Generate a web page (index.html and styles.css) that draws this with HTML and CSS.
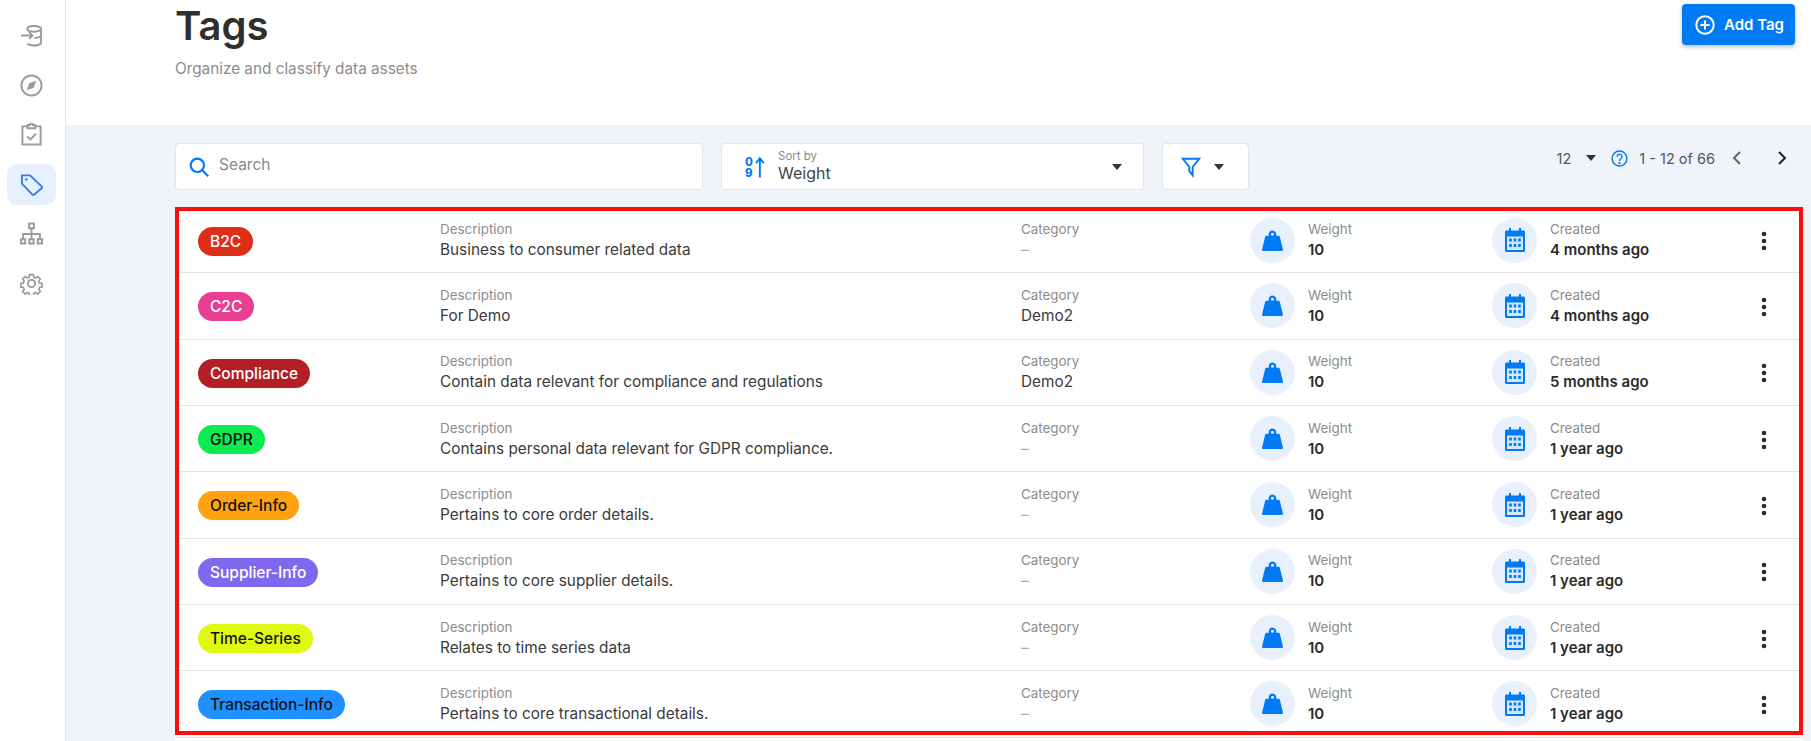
FILE: index.html
```html
<!DOCTYPE html>
<html lang="en">
<head>
    <meta charset="UTF-8">
    <title>Tags</title>
    <link rel="stylesheet" href="styles.css">
</head>
<body>
    <svg class="icon-defs" width="0" height="0">
        <symbol id="i-weight" viewBox="0 0 24 24">
            <path fill-rule="evenodd" d="M12 1.500a4 4 0 0 1 3.700 5.500H18c.8 0 1.500.5 1.700 1.300l3.200 13c.2.800-.3 1.700-1.200 1.700H2.300c-.9 0-1.400-.9-1.200-1.700l3.200-13C4.500 7.500 5.200 7 6 7h2.300A4 4 0 0 1 12 1.500zm0 2.400a1.600 1.600 0 1 0 0 3.200 1.600 1.600 0 0 0 0-3.200z"/>
        </symbol>
        <symbol id="i-calendar" viewBox="0 0 20 24">
            <path class="cal-body" d="M2 8h16v14H2z"/>
            <path d="M4 0h2v2.500h8V0h2v2.500h2.500c.8 0 1.500.7 1.500 1.500v18.500c0 .8-.7 1.500-1.500 1.500h-17C.7 24 0 23.300 0 22.500V4c0-.8.7-1.500 1.500-1.500H4zM2 8.500V22h16V8.500z"/>
            <path d="M4.200 10.500h2.600v3H4.200zm4.500 0h2.600v3H8.700zm4.500 0h2.600v3h-2.600zM4.200 16h2.600v3H4.200zm4.500 0h2.600v3H8.700zm4.500 0h2.600v3h-2.600z"/>
        </symbol>
        <symbol id="i-dots" viewBox="0 0 6 20">
            <circle cx="3" cy="3" r="2.300"/><circle cx="3" cy="10" r="2.300"/><circle cx="3" cy="17" r="2.300"/>
        </symbol>
    </svg>

    <div class="app">
        <nav class="sidebar">
            <a class="nav-item">
                <svg viewBox="0 0 24 24"><path d="M1 12h12M9.500 8.500 13 12l-3.500 3.500M7.500 5C7.500 3.300 10.500 2 14.500 2s7.500 1.300 7.500 3v14.500c0 1.700-3.500 3-7.500 3-3 0-5.500-.7-6.800-1.800M7.500 5c0 1.700 3 3 7 3s7.500-1.300 7.500-3M15 14.500c4 0 7-1 7-3"/></svg>
            </a>
            <a class="nav-item">
                <svg viewBox="0 0 24 24"><circle cx="12" cy="12" r="10.500"/><path class="solid" d="m17 7-2.700 7.300L7 17l2.700-7.300z"/></svg>
            </a>
            <a class="nav-item">
                <svg viewBox="0 0 24 24"><path d="M8 3.500H2.500v19h19v-19H16M8 2h2.500a1.500 1.500 0 0 1 3 0H16v3.500H8zM7.500 14l3.200 3.200 6-6"/></svg>
            </a>
            <a class="nav-item active">
                <svg viewBox="0 0 24 24"><path d="M2 2.500h8.500L22.500 14a1.400 1.400 0 0 1 0 2L15 22.500a1.400 1.400 0 0 1-2 0L2 11z"/><circle class="solid" cx="6.500" cy="6.800" r="1.300"/></svg>
            </a>
            <a class="nav-item">
                <svg viewBox="0 0 24 24"><path d="M9.500 1.500h5v5h-5zM1 18h4.500v4.500H1zm8.750 0h4.500v4.500h-4.500zm8.750 0H23v4.500h-4.500zM12 6.500V18M3.250 18v-5.500h17.500V18"/></svg>
            </a>
            <a class="nav-item">
                <svg viewBox="0 0 24 24"><circle cx="12" cy="12" r="3.800"/><path d="M9.800 1.500h4.400l.6 3.100 2 .9 2.700-1.800 3 3-1.800 2.700.9 2 2.900.6v4.200l-2.900.6-.9 2 1.800 2.700-3 3-2.700-1.800-2 .9-.6 3.100H9.800l-.6-3.100-2-.9-2.700 1.800-3-3 1.800-2.700-.9-2-2.900-.6v-4.200l2.900-.6.9-2-1.800-2.700 3-3 2.700 1.800 2-.9z" transform="translate(1.400 1.400) scale(.88)"/></svg>
            </a>
        </nav>

        <main class="main">
            <header class="page-header">
                <div>
                    <h1>Tags</h1>
                    <p class="subtitle">Organize and classify data assets</p>
                </div>
                <button class="add-btn">
                    <svg viewBox="0 0 24 24"><circle cx="12" cy="12" r="10.500"/><path d="M12 6.500v11M6.500 12h11"/></svg>
                    Add Tag
                </button>
            </header>

            <section class="content">
                <div class="toolbar">
                    <div class="box search-box">
                        <svg class="ico" viewBox="0 0 24 24"><circle cx="10" cy="10" r="8"/><path d="m16 16 7 7"/></svg>
                        <span>Search</span>
                    </div>
                    <div class="box sort-box">
                        <svg class="sort-ico" viewBox="0 0 24 24"><text x="0" y="11" class="digit">0</text><text x="0" y="23.500" class="digit">9</text><path d="M17 24V3M12.500 7.500 17 2l4.500 5.500"/></svg>
                        <div class="sort-text">
                            <span class="sort-label">Sort by</span>
                            <span class="sort-value">Weight</span>
                        </div>
                        <i class="caret"></i>
                    </div>
                    <div class="box filter-box">
                        <svg class="ico" viewBox="0 0 24 24"><path d="M2 2h20l-8 10v10l-4-5v-5z"/></svg>
                        <i class="caret"></i>
                    </div>
                    <div class="pager">
                        <span class="page-size">12</span>
                        <i class="caret"></i>
                        <svg class="help" viewBox="0 0 24 24"><circle cx="12" cy="12" r="10.500"/><path d="M8.500 9.500a3.500 3.500 0 1 1 5.500 2.900c-1.300.9-2 1.600-2 3"/><circle class="dot" cx="12" cy="18.500" r=".7"/></svg>
                        <span class="page-range">1 - 12 of 66</span>
                        <svg class="chev prev" viewBox="0 0 10 16"><path d="M8 2 2 8l6 6"/></svg>
                        <svg class="chev next" viewBox="0 0 10 16"><path d="m2 2 6 6-6 6"/></svg>
                    </div>
                </div>

                <div class="tag-list">
                    <div class="row">
                        <div><span class="pill pill-b2c">B2C</span></div>
                        <div><div class="label">Description</div><div class="value">Business to consumer related data</div></div>
                        <div><div class="label">Category</div><div class="value muted">–</div></div>
                        <div class="stat"><span class="circle"><svg class="weight"><use href="#i-weight"/></svg></span><div><div class="label">Weight</div><div class="value strong">10</div></div></div>
                        <div class="stat"><span class="circle"><svg class="cal"><use href="#i-calendar"/></svg></span><div><div class="label">Created</div><div class="value strong">4 months ago</div></div></div>
                        <svg class="dots"><use href="#i-dots"/></svg>
                    </div>
                    <div class="row">
                        <div><span class="pill pill-c2c">C2C</span></div>
                        <div><div class="label">Description</div><div class="value">For Demo</div></div>
                        <div><div class="label">Category</div><div class="value">Demo2</div></div>
                        <div class="stat"><span class="circle"><svg class="weight"><use href="#i-weight"/></svg></span><div><div class="label">Weight</div><div class="value strong">10</div></div></div>
                        <div class="stat"><span class="circle"><svg class="cal"><use href="#i-calendar"/></svg></span><div><div class="label">Created</div><div class="value strong">4 months ago</div></div></div>
                        <svg class="dots"><use href="#i-dots"/></svg>
                    </div>
                    <div class="row">
                        <div><span class="pill pill-compliance">Compliance</span></div>
                        <div><div class="label">Description</div><div class="value">Contain data relevant for compliance and regulations</div></div>
                        <div><div class="label">Category</div><div class="value">Demo2</div></div>
                        <div class="stat"><span class="circle"><svg class="weight"><use href="#i-weight"/></svg></span><div><div class="label">Weight</div><div class="value strong">10</div></div></div>
                        <div class="stat"><span class="circle"><svg class="cal"><use href="#i-calendar"/></svg></span><div><div class="label">Created</div><div class="value strong">5 months ago</div></div></div>
                        <svg class="dots"><use href="#i-dots"/></svg>
                    </div>
                    <div class="row">
                        <div><span class="pill pill-gdpr">GDPR</span></div>
                        <div><div class="label">Description</div><div class="value">Contains personal data relevant for GDPR compliance.</div></div>
                        <div><div class="label">Category</div><div class="value muted">–</div></div>
                        <div class="stat"><span class="circle"><svg class="weight"><use href="#i-weight"/></svg></span><div><div class="label">Weight</div><div class="value strong">10</div></div></div>
                        <div class="stat"><span class="circle"><svg class="cal"><use href="#i-calendar"/></svg></span><div><div class="label">Created</div><div class="value strong">1 year ago</div></div></div>
                        <svg class="dots"><use href="#i-dots"/></svg>
                    </div>
                    <div class="row">
                        <div><span class="pill pill-order">Order-Info</span></div>
                        <div><div class="label">Description</div><div class="value">Pertains to core order details.</div></div>
                        <div><div class="label">Category</div><div class="value muted">–</div></div>
                        <div class="stat"><span class="circle"><svg class="weight"><use href="#i-weight"/></svg></span><div><div class="label">Weight</div><div class="value strong">10</div></div></div>
                        <div class="stat"><span class="circle"><svg class="cal"><use href="#i-calendar"/></svg></span><div><div class="label">Created</div><div class="value strong">1 year ago</div></div></div>
                        <svg class="dots"><use href="#i-dots"/></svg>
                    </div>
                    <div class="row">
                        <div><span class="pill pill-supplier">Supplier-Info</span></div>
                        <div><div class="label">Description</div><div class="value">Pertains to core supplier details.</div></div>
                        <div><div class="label">Category</div><div class="value muted">–</div></div>
                        <div class="stat"><span class="circle"><svg class="weight"><use href="#i-weight"/></svg></span><div><div class="label">Weight</div><div class="value strong">10</div></div></div>
                        <div class="stat"><span class="circle"><svg class="cal"><use href="#i-calendar"/></svg></span><div><div class="label">Created</div><div class="value strong">1 year ago</div></div></div>
                        <svg class="dots"><use href="#i-dots"/></svg>
                    </div>
                    <div class="row">
                        <div><span class="pill pill-time">Time-Series</span></div>
                        <div><div class="label">Description</div><div class="value">Relates to time series data</div></div>
                        <div><div class="label">Category</div><div class="value muted">–</div></div>
                        <div class="stat"><span class="circle"><svg class="weight"><use href="#i-weight"/></svg></span><div><div class="label">Weight</div><div class="value strong">10</div></div></div>
                        <div class="stat"><span class="circle"><svg class="cal"><use href="#i-calendar"/></svg></span><div><div class="label">Created</div><div class="value strong">1 year ago</div></div></div>
                        <svg class="dots"><use href="#i-dots"/></svg>
                    </div>
                    <div class="row">
                        <div><span class="pill pill-transaction">Transaction-Info</span></div>
                        <div><div class="label">Description</div><div class="value">Pertains to core transactional details.</div></div>
                        <div><div class="label">Category</div><div class="value muted">–</div></div>
                        <div class="stat"><span class="circle"><svg class="weight"><use href="#i-weight"/></svg></span><div><div class="label">Weight</div><div class="value strong">10</div></div></div>
                        <div class="stat"><span class="circle"><svg class="cal"><use href="#i-calendar"/></svg></span><div><div class="label">Created</div><div class="value strong">1 year ago</div></div></div>
                        <svg class="dots"><use href="#i-dots"/></svg>
                    </div>
                    <div class="highlight"></div>
                </div>
            </section>
        </main>
    </div>
</body>
</html>
```

FILE: styles.css
```css
* {
    box-sizing: border-box;
}

html, body {
    margin: 0;
    height: 100%;
    overflow: hidden;
}

body {
    font-family: "Inter", "Noto Sans", sans-serif;
    color: #333;
    background: #fff;
}

.icon-defs {
    position: absolute;
}

.app {
    display: flex;
    height: 741px;
    overflow: hidden;
}

/* Sidebar */
.sidebar {
    width: 66px;
    flex: none;
    border-right: 1px solid #e6e6e6;
    padding: 15px 0 0 7px;
    display: flex;
    flex-direction: column;
    gap: 8.500px;
}

.nav-item {
    width: 49px;
    height: 41px;
    border-radius: 10px;
    display: flex;
    align-items: center;
    justify-content: center;
}

.nav-item svg {
    width: 23px;
    height: 23px;
    fill: none;
    stroke: #9b9b9b;
    stroke-width: 2;
}

.nav-item .solid {
    fill: #9b9b9b;
    stroke: none;
}

.nav-item.active {
    background: #e8f0fd;
}

.nav-item.active svg {
    stroke: #2f7fee;
}

.nav-item.active .solid {
    fill: #2f7fee;
}

/* Header */
.main {
    flex: 1;
    min-width: 0;
    display: flex;
    flex-direction: column;
}

.page-header {
    height: 125px;
    flex: none;
    padding: 4px 16px 0 109px;
    display: flex;
    justify-content: space-between;
    align-items: flex-start;
}

h1 {
    margin: 0;
    font-size: 40px;
    line-height: 44px;
    font-weight: 600;
    color: #2f2f2f;
}

.subtitle {
    margin: 9px 0 0;
    font-size: 15.300px;
    line-height: 24px;
    color: #8c8c8c;
}

.add-btn {
    width: 113px;
    height: 41px;
    border: 0;
    border-radius: 4px;
    background: #007bf5;
    color: #fff;
    font: 600 15px "Inter", sans-serif;
    display: flex;
    align-items: center;
    gap: 9px;
    padding: 0 0 0 13px;
    box-shadow: 0 2px 4px rgba(0, 0, 0, 0.25);
}

.add-btn svg {
    width: 20px;
    height: 20px;
    fill: none;
    stroke: #fff;
    stroke-width: 2.400;
}

/* Toolbar */
.content {
    flex: 1;
    background: #f0f4f9;
    padding: 18px 8px 0 109px;
}

.toolbar {
    display: flex;
    gap: 18px;
    height: 47px;
    margin-bottom: 17px;
}

.box {
    background: #fff;
    border: 1px solid #e2e6ea;
    border-radius: 4px;
    height: 47px;
    display: flex;
    align-items: center;
}

.ico {
    fill: none;
    stroke: #007bf5;
    stroke-width: 2.600;
}

.search-box {
    width: 528px;
    padding: 0 0 4px 13px;
    gap: 10px;
    color: #888;
    font-size: 15.500px;
}

.search-box .ico {
    width: 20px;
    height: 20px;
    margin-top: 4px;
}

.sort-box {
    width: 423px;
    padding: 0 21px 2px 23px;
}

.sort-ico {
    width: 21px;
    height: 24px;
    fill: none;
    stroke: #007bf5;
    stroke-width: 2.200;
    margin: 2px 12px 0 0;
}

.digit {
    font: 800 13px "Inter", sans-serif;
    fill: #007bf5;
    stroke: none;
}

.sort-text {
    flex: 1;
    display: flex;
    flex-direction: column;
}

.sort-label {
    font-size: 11.500px;
    line-height: 14px;
    color: #888;
}

.sort-value {
    font-size: 16px;
    line-height: 20px;
    color: #444;
}

.caret {
    width: 0;
    height: 0;
    border-left: 5.500px solid transparent;
    border-right: 5.500px solid transparent;
    border-top: 6px solid #333;
}

.sort-box .caret {
    margin-top: 2px;
}

.filter-box {
    width: 87px;
    padding-left: 18px;
    gap: 13px;
}

.filter-box .ico {
    width: 20px;
    height: 22px;
    stroke-width: 2.300;
}

.pager {
    margin-left: auto;
    height: 30px;
    display: flex;
    align-items: center;
    font-size: 14.500px;
    color: #555;
    padding-right: 16px;
}

.page-size {
    margin-right: 15px;
}

.help {
    width: 17px;
    height: 17px;
    margin: 0 11px 0 15px;
    fill: none;
    stroke: #007bf5;
    stroke-width: 2;
}

.help .dot {
    fill: #007bf5;
}

.chev {
    width: 10px;
    height: 16px;
    fill: none;
    stroke-width: 2;
}

.prev {
    stroke: #666;
    margin-left: 17px;
}

.next {
    stroke: #222;
    margin-left: 35px;
}

/* Tag rows */
.tag-list {
    position: relative;
    background: #fff;
    height: 600px;
}

.row {
    height: 66.330px;
    padding-left: 23px;
    border-bottom: 1px solid #e4e4e4;
    display: grid;
    grid-template-columns: 242px 581px 229px 242px 269px 6px;
    align-items: center;
}

.row:first-child {
    padding-top: 1px;
}

.pill {
    display: inline-block;
    height: 29px;
    line-height: 29px;
    padding: 0 12px;
    border-radius: 15px;
    font-size: 15.500px;
    font-weight: 500;
    position: relative;
    top: 1px;
}

.pill-b2c { background: #e02d17; color: #fff; }
.pill-c2c { background: #e83e94; color: #fff; }
.pill-compliance { background: #b21f24; color: #fff; }
.pill-gdpr { background: #0ceb4f; color: #111; }
.pill-order { background: #ffa20d; color: #111; }
.pill-supplier { background: #7f68ee; color: #fff; }
.pill-time { background: #dffa10; color: #111; }
.pill-transaction { background: #1e90ff; color: #111; }

.label {
    font-size: 13.400px;
    line-height: 20px;
    margin-bottom: 1px;
    color: #8c8c8c;
}

.value {
    font-size: 15.350px;
    line-height: 20px;
    padding-bottom: 1px;
    color: #3a3a3a;
}

.muted {
    color: #aaa;
}

.strong {
    font-weight: 600;
    font-size: 15px;
    color: #2b2b2b;
}

.stat {
    display: flex;
    align-items: center;
    gap: 13px;
}

.circle {
    width: 45px;
    height: 45px;
    border-radius: 50%;
    background: #e8f0fc;
    display: flex;
    align-items: center;
    justify-content: center;
}

.weight {
    width: 23px;
    height: 23px;
    fill: #007bf5;
}

.cal {
    width: 20px;
    height: 24px;
    fill: #007bf5;
}

.cal-body {
    fill: #d6e6fb;
}

.dots {
    width: 6px;
    height: 20px;
    margin-top: 2px;
    fill: #2b2b2b;
}

/* red annotation drawn over the list */
.highlight {
    position: absolute;
    top: 0;
    left: 0;
    right: 0;
    height: 528px;
    border: 4px solid #fb0d0d;
    pointer-events: none;
}
```
